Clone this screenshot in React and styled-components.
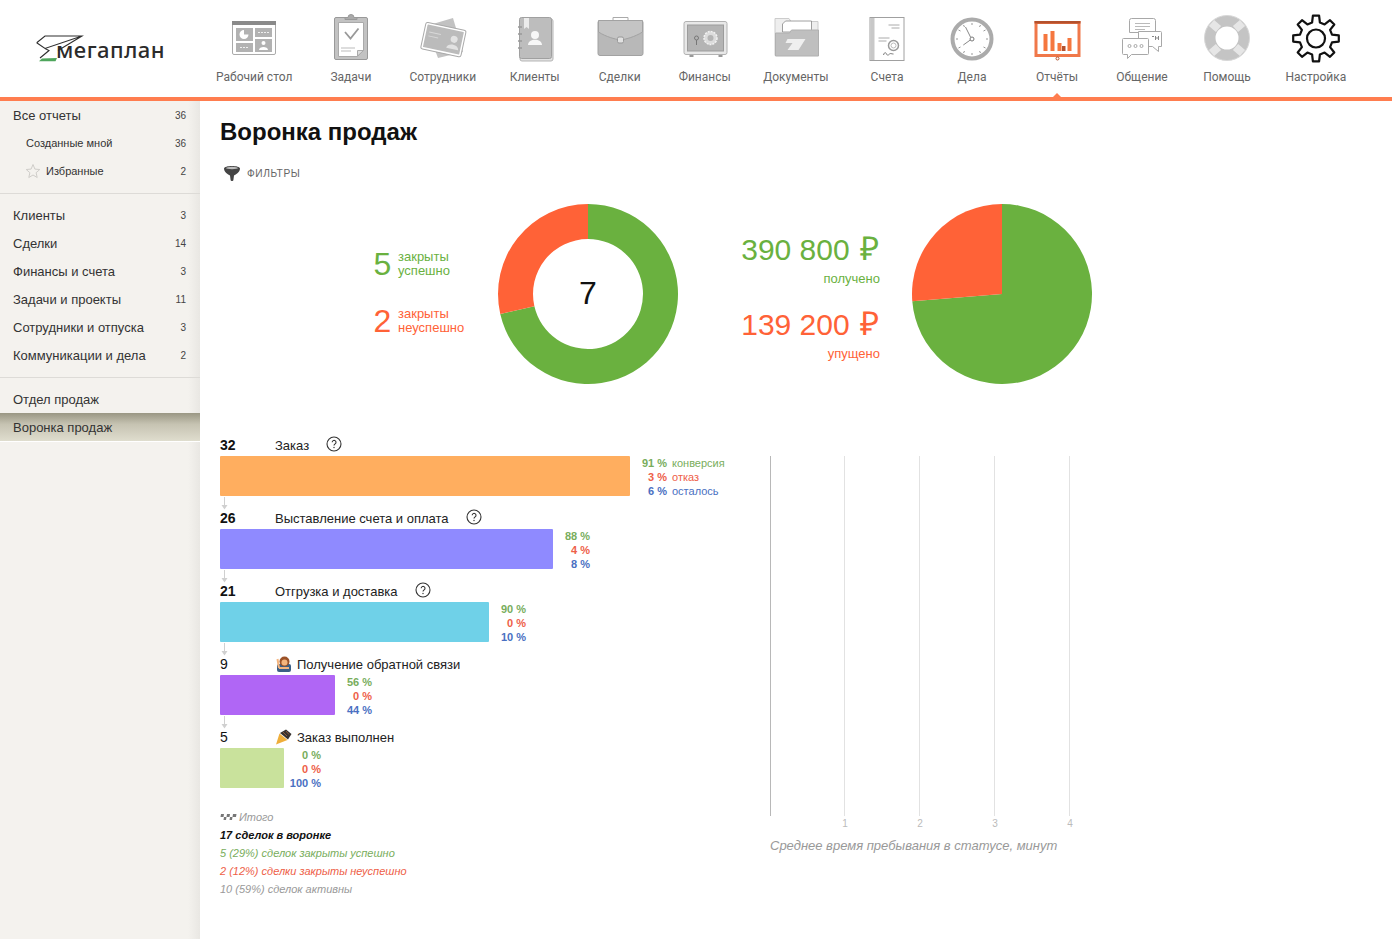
import React from "react";
import styled, { createGlobalStyle } from "styled-components";

const Global = createGlobalStyle`
  html, body { margin: 0; padding: 0; height: 100%; background: #fff; overflow: hidden; }
  body { font-family: "Liberation Sans", Arial, sans-serif; color: #222; }
  #root { height: 100%; }
`;

const Page = styled.div`display: flex; flex-direction: column; height: 939px; overflow: hidden;`;
const Header = styled.header`display: flex; height: 97px; flex: none;`;
const LogoBox = styled.div`width: 200px; flex: none; position: relative; height: 97px;`;
const LogoText = styled.span`
  position: absolute; left: 56px; top: 35px; font: 500 22px/28px "Noto Sans", sans-serif;
  letter-spacing: 0.5px; color: #2b2b2b;
`;
const Nav = styled.nav`display: flex; padding-top: 13px;`;
const NavItem = styled.a`
  display: flex; flex-direction: column; align-items: center; min-width: 85px; padding: 0 16px;
  box-sizing: border-box; flex: none;
`;
const NavLabel = styled.span`
  margin-top: 7px; font: 400 12px/14px Roboto, sans-serif; color: #666; white-space: nowrap;
`;
const IconSvg = styled.svg`display: block; width: 60px; height: 50px; flex: none; margin: 0 -30px;`;
const Rule = styled.div`height: 4px; background: #ff7d4f; flex: none; position: relative;
  &::before { content: ""; position: absolute; left: 1053px; top: -4px; border: 4px solid transparent;
    border-top: 0; border-bottom: 4px solid #ff7d4f; }
`;
const Body = styled.div`display: flex; flex: 1; min-height: 0;`;
const Side = styled.aside`
  width: 200px; flex: none; background: linear-gradient(90deg, #f4f2ee 0, #f4f2ee 188px, #e9e7e3 200px);
`;
const Section = styled.div`
  padding: ${p => (p.$first ? "0 0 8px" : "7px 0 8px")};
  border-bottom: ${p => (p.$open ? "0" : "1px solid #dddbd7")};
`;
const Row = styled.div`
  height: 28px; display: flex; align-items: center; padding: 0 14px 0 ${p => p.$indent || 13}px;
  font-size: ${p => p.$small ? 11 : 13}px; color: #333; box-sizing: border-box;
  ${p => p.$active && `background: linear-gradient(180deg, #9a9784 0, #c6c3b2 40%, #dfddce 100%); box-shadow: 0 1px 0 #fff;`}
`;
const RowName = styled.span`flex: 1; white-space: nowrap;`;
const Count = styled.span`font-size: 10px; color: #444;`;
const StarIcon = styled.svg`width: 16px; height: 16px; margin-right: 5px; flex: none;`;

const Main = styled.main`flex: 1; padding: 16px 0 0 20px; min-width: 0;`;
const Title = styled.h1`margin: 0; font: 700 24px/30px "Liberation Sans", sans-serif; color: #111;`;
const Filters = styled.div`
  display: flex; align-items: center; height: 20px; margin-top: 16px; padding-left: 3px;
  font-size: 10.2px; letter-spacing: 0.55px; color: #666;
`;
const FilterIcon = styled.svg`width: 18px; height: 18px; margin-right: 6px; flex: none;`;

const Charts = styled.section`display: flex; margin-top: 21px; height: 180px; padding-left: 153.500px;`;
const Deals = styled.div`width: 124px; flex: none; padding-top: 42px; box-sizing: border-box;`;
const Deal = styled.div`
  display: flex; align-items: center; height: 36px; margin-bottom: 21px; color: ${p => p.$c};
`;
const DealNum = styled.span`font-size: 32px; line-height: 36px; width: 24.500px; flex: none;`;
const DealText = styled.span`font-size: 13px; line-height: 14px;`;
const Ring = styled.svg`width: 180px; height: 180px; flex: none; display: block;`;
const Money = styled.div`
  width: 202.500px; flex: none; margin-right: 32px; text-align: right; padding-top: 28px; box-sizing: border-box;
`;
const Amount = styled.div`color: ${p => p.$c}; margin-bottom: 20px;`;
const Sum = styled.div`font-size: 30px; line-height: 36px; white-space: nowrap;`;
const Rub = styled.span`font-size: 33px; line-height: 0; margin-left: 2px; margin-right: 1px;`;
const SumCap = styled.div`font-size: 13px; line-height: 16px; margin-top: 3px;`;

const Lower = styled.section`display: flex; margin-top: 53px;`;
const Funnel = styled.div`width: 550px; flex: none;`;
const Stage = styled.div`height: 73px;`;
const StageHead = styled.div`display: flex; align-items: center; height: 16px; margin-bottom: 3px; font-size: 13px; color: #222;`;
const StageNum = styled.b`width: 55px; flex: none; font-size: 14px; color: #111; font-weight: ${p => p.$plain ? 400 : 700};`;
const Help = styled.svg`width: 16px; height: 16px; margin: -2px 0 0 17px; flex: none;`;
const Emoji = styled.svg`width: 17px; height: 16px; margin-right: 5px; flex: none;`;
const BarRow = styled.div`display: flex; height: 40px; align-items: flex-start;`;
const Bar = styled.div`height: 40px; background: ${p => p.$c}; border-radius: 1px; flex: none;`;
const Pcts = styled.div`width: 37px; flex: none; text-align: right; font-size: 11px; font-weight: 700;`;
const Caps = styled.div`margin-left: 5px; font-size: 11px;`;
const Line = styled.div`line-height: 14px; height: 14px; white-space: nowrap; color: ${p => p.$c};`;
const Arrow = styled.svg`display: block; width: 10px; height: 14px;`;
const Totals = styled.div`margin-top: 6px; font-size: 11px; font-style: italic; line-height: 18px;`;
const Total = styled.div`color: ${p => p.$c}; font-weight: ${p => p.$b ? 700 : 400}; display: flex; align-items: center;`;
const TotalIcon = styled.svg`width: 17px; height: 8px; margin-right: 2px;`;

const Time = styled.div`padding-top: 19px;`;
const TimeSvg = styled.svg`display: block; width: 310px; height: 376px;`;
const TimeCap = styled.div`margin-top: 6px; font-size: 13px; line-height: 16px; font-style: italic; color: #999; white-space: nowrap;`;

const G = "#6ab13f", R = "#ff6237";

const desk = (
  <g>
    <rect x="233.5" y="21.5" width="43" height="33" rx="1.5" fill="#fff" stroke="#aaa" />
    <rect x="233" y="21" width="44" height="4" fill="#8a8a8a" />
    <rect x="237" y="28" width="17" height="13" fill="#b2b2b2" />
    <rect x="256" y="28" width="17" height="9" fill="#b2b2b2" />
    <rect x="237" y="43" width="17" height="9" fill="#b2b2b2" />
    <rect x="256" y="39" width="17" height="13" fill="#b2b2b2" />
    <path d="M245 30a4.5 4.5 0 1 0 4.5 4.5H245z" fill="#fff" />
    <path d="M259 32.500h11M241 47.500h9" stroke="#eee" strokeDasharray="2 1" />
    <circle cx="264.500" cy="43" r="2" fill="#fff" />
    <path d="M260 50c0-4 9-4 9 0z" fill="#fff" />
  </g>
);
const clip = (
  <g>
    <rect x="334.500" y="17.500" width="33" height="42" rx="1.500" fill="#c2c2c2" stroke="#999" />
    <path d="M338.500 22.500h25v28l-6 6h-19z" fill="#fff" stroke="#aaa" />
    <path d="M357.500 56v-5.500h6z" fill="#ddd" stroke="#aaa" />
    <path d="M345 19.500h12v-2h-3a3 3 0 0 0-6 0h-3z" fill="#aaa" stroke="#999" />
    <path d="M345 32l5.500 6.500 8-10" fill="none" stroke="#999" strokeWidth="1.800" />
    <path d="M341 48h14M341 51h10" stroke="#bbb" />
  </g>
);
const staff = (
  <g>
    <path d="M426 26l27-8 10 34-25 6z" fill="#c2c2c2" />
    <g transform="rotate(12 443 39)">
      <rect x="424" y="27" width="39" height="25" rx="1.500" fill="#bbb" stroke="#fff" strokeWidth="2" />
      <rect x="423" y="26" width="41" height="27" rx="2" fill="none" stroke="#aaa" />
      <circle cx="454" cy="37" r="3.500" fill="#e2e2e2" />
      <path d="M448 47c0-6 12-6 12 0z" fill="#e2e2e2" />
      <path d="M428 35h12M428 39h10" stroke="#d8d8d8" />
    </g>
  </g>
);
const book = (
  <g>
    <rect x="520" y="19" width="33" height="42" rx="2" fill="#e2e2e2" stroke="#b5b5b5" />
    <rect x="519.500" y="17.500" width="32" height="41" rx="2" fill="#bdbdbd" stroke="#a0a0a0" />
    <path d="M524 18h5v11l-2.500-2-2.500 2z" fill="#ececec" />
    <path d="M518 27h4M518 34h4M518 41h4M518 48h4" stroke="#999" strokeWidth="1.500" />
    <circle cx="535" cy="35" r="4" fill="#f7f7f7" />
    <path d="M528 45c0-7 14-7 14 0z" fill="#f7f7f7" />
  </g>
);
const bag = (
  <g>
    <path d="M613.500 20v-2.500h15V20" fill="none" stroke="#aaa" />
    <rect x="598.500" y="20.500" width="45" height="35" rx="2" fill="#b8b8b8" stroke="#a2a2a2" />
    <path d="M599 20.500h44V32c-8 5-16 7-22 8-6-1-14-3-22-8z" fill="#c4c4c4" stroke="#a2a2a2" />
    <rect x="618" y="37" width="6" height="6" rx="1.500" fill="#e2e2e2" stroke="#999" />
  </g>
);
const safe = (
  <g>
    <rect x="684.500" y="21.500" width="43" height="33" rx="2" fill="#e8e8e8" stroke="#b2b2b2" />
    <rect x="688" y="25" width="36" height="26" fill="#b4b4b4" stroke="#9c9c9c" />
    <circle cx="711" cy="38" r="6.500" fill="#dcdcdc" stroke="#f2f2f2" strokeDasharray="2 1" strokeWidth="1.500" />
    <circle cx="711" cy="38" r="3" fill="#b4b4b4" />
    <circle cx="697" cy="38" r="2" fill="none" stroke="#777" />
    <path d="M697 40v5" stroke="#777" />
    <path d="M690 56h4M719 56h4" stroke="#999" strokeWidth="2" />
  </g>
);
const folder = (
  <g>
    <path d="M775.500 55.500v-37h14l2 3h27v33z" fill="#eee" stroke="#ccc" />
    <path d="M783 32v-8l3-3h26v11z" fill="#fff" stroke="#888" strokeWidth=".8" />
    <path d="M776 56V33h14l2-3h27v26z" fill="#bfbfbf" stroke="#b0b0b0" />
    <path d="M788 39h18l-7 11h-11l5-7h-7z" fill="#efefef" />
  </g>
);
const invoice = (
  <g>
    <rect x="870.500" y="17.500" width="34" height="43" fill="#fff" stroke="#a0a0a0" />
    <rect x="871" y="18" width="4" height="42" fill="#c8c8c8" />
    <path d="M889 25h11M892 28h8M879 38h11M879 41h8" stroke="#aaa" />
    <circle cx="894" cy="45.500" r="5" fill="#fff" stroke="#999" strokeWidth="1.500" />
    <circle cx="894" cy="45.500" r="2.500" fill="none" stroke="#bbb" />
    <path d="M884 55c1-3 2-3 3-1s2 1 3 0 2 0 4 0" fill="none" stroke="#777" />
  </g>
);
const clock = (
  <g>
    <circle cx="972.500" cy="39" r="19.500" fill="#fff" stroke="#ababab" strokeWidth="4" />
    <circle cx="972.500" cy="39" r="2" fill="#fff" stroke="#777" />
    <path d="M971 37l-5-10M970.800 40l-7 5" stroke="#888" />
    <path d="M972.500 23v2M972.500 53v2M956.500 39h2M986.500 39h2M964 25l1 2M981 25l-1 2M964 53l1-2M981 53l-1-2M959 30l2 1M986 30l-2 1M959 48l2-1M986 48l-2-1" stroke="#999" />
  </g>
);
const report = (
  <g>
    <rect x="1036.500" y="22.500" width="43" height="33" fill="#fff" stroke="#f0784a" strokeWidth="3" />
    <rect x="1035" y="21" width="46" height="2.500" fill="#b4512d" />
    <rect x="1044" y="34" width="4" height="17" fill="#f5773f" />
    <rect x="1051" y="31" width="4" height="20" fill="#f5773f" />
    <rect x="1058" y="43" width="4" height="8" fill="#f5773f" />
    <rect x="1062.500" y="46" width="3.500" height="5" fill="#b4512d" />
    <rect x="1068" y="38" width="4" height="13" fill="#f5773f" />
    <circle cx="1058" cy="58.500" r="1.500" fill="#fff" stroke="#b4512d" />
  </g>
);
const chat = (
  <g fill="#fff" stroke="#a8a8a8">
    <path d="M1131.500 18.500h22a2 2 0 0 1 2 2v12h-26v-12a2 2 0 0 1 2-2z" />
    <path d="M1135 23.500h15M1135 26.500h15M1135 29.500h10" strokeWidth=".8" />
    <path d="M1138.500 31.500h22a1 1 0 0 1 1 1v14h-3v5l-6-5h-14z" />
    <path d="M1123.500 38.500h24a1 1 0 0 1 1 1v14a1 1 0 0 1-1 1h-16l-4 4v-4h-4a1 1 0 0 1-1-1v-14a1 1 0 0 1 1-1z" />
    <circle cx="1129.500" cy="46" r="1.500" />
    <circle cx="1135.500" cy="46" r="1.500" />
    <circle cx="1141.500" cy="46" r="1.500" />
    <path d="M1152 36.500h2M1155.500 36v4M1158.500 36v4M1155.500 38h3" stroke="#888" />
  </g>
);
const buoy = (
  <g>
    <circle cx="1227.500" cy="38" r="17" fill="#fff" stroke="#c4c4c4" strokeWidth="11" />
    <path d="M1212 23l7 6M1243 23l-7 6M1212 53l7-6M1243 53l-7-6" stroke="#e6e6e6" strokeWidth="8" />
    <circle cx="1227.500" cy="38" r="22.500" fill="none" stroke="#d8d8d8" />
  </g>
);

function gearPath(cx, cy, ro, ri, n) {
  const step = (Math.PI * 2) / n;
  let d = "";
  for (let i = 0; i < n; i++) {
    const a = i * step - Math.PI / 2;
    const pts = [
      [ri, a - step * 0.3], [ro, a - step * 0.17], [ro, a + step * 0.17], [ri, a + step * 0.3],
    ];
    pts.forEach(([r, t], k) => {
      const x = (cx + r * Math.cos(t)).toFixed(1), y = (cy + r * Math.sin(t)).toFixed(1);
      d += (i === 0 && k === 0 ? "M" : "L") + x + " " + y + " ";
    });
  }
  return d + "Z";
}
const gear = (
  <g fill="none" stroke="#111" strokeWidth="2.200" strokeLinejoin="round">
    <path d={gearPath(1316, 38.500, 23, 16.500, 8)} />
    <circle cx="1316" cy="38.500" r="9" />
  </g>
);

const navItems = [
  ["Рабочий стол", 255, desk], ["Задачи", 351, clip], ["Сотрудники", 443, staff], ["Клиенты", 535, book],
  ["Сделки", 620.5, bag], ["Финансы", 705.5, safe], ["Документы", 796.5, folder], ["Счета", 887.5, invoice],
  ["Дела", 972.5, clock], ["Отчёты", 1057.5, report], ["Общение", 1142, chat], ["Помощь", 1227.5, buoy], ["Настройка", 1316, gear],
];

const sideTop = [["Все отчеты", 36, 13], ["Созданные мной", 36, 26, true]];
const sideMid = [["Клиенты", 3], ["Сделки", 14], ["Финансы и счета", 3], ["Задачи и проекты", 11], ["Сотрудники и отпуска", 3], ["Коммуникации и дела", 2]];

const Person = () => (
  <Emoji viewBox="0 0 17 16">
    <rect x="2" y="8" width="14" height="8" rx="2" fill="#3b5f86" />
    <circle cx="9.500" cy="5.500" r="5" fill="#9c5228" />
    <circle cx="9.500" cy="6.500" r="3" fill="#f5b57e" />
    <path d="M2.500 3l1.500 9M4 12h10" stroke="#f5b57e" strokeWidth="2" />
  </Emoji>
);
const Popper = () => (
  <Emoji viewBox="0 0 17 16">
    <path d="M1 15.500l3.500-11 8 6.500z" fill="#efae3a" />
    <path d="M5 4l6-3.500L16.500 5 13 10.500z" fill="#37332f" />
    <path d="M8 3l4 4M11 2l3 3.500" stroke="#8b5a3c" />
  </Emoji>
);
const HelpIcon = () => (
  <Help viewBox="0 0 16 16">
    <circle cx="8" cy="8" r="7" fill="#fff" stroke="#333" strokeWidth="1.100" />
    <path d="M6.200 6.300a1.900 1.900 0 1 1 2.900 1.600c-.7.5-1.100.8-1.100 1.700" fill="none" stroke="#333" strokeWidth="1.100" />
    <circle cx="8" cy="11.500" r=".7" fill="#333" />
  </Help>
);

const stages = [
  { n: 32, name: "Заказ", w: 410, c: "#ffae5f", p: [91, 3, 6], caps: true, help: true },
  { n: 26, name: "Выставление счета и оплата", w: 333, c: "#8f8aff", p: [88, 4, 8], help: true },
  { n: 21, name: "Отгрузка и доставка", w: 269, c: "#6fd1e8", p: [90, 0, 10], help: true },
  { n: 9, name: "Получение обратной связи", w: 115, c: "#b066f5", p: [56, 0, 44], emoji: <Person /> },
  { n: 5, name: "Заказ выполнен", w: 64, c: "#c9e29c", p: [0, 0, 100], emoji: <Popper />, last: true },
];
const PG = "#78ad5c", PR = "#ee6048", PB = "#4a70c2";

const polar = (cx, cy, r, f) => {
  const t = f * Math.PI * 2;
  return [cx + r * Math.sin(t), cy - r * Math.cos(t)];
};
function Donut({ frac, inner, children }) {
  const [x, y] = polar(90, 90, 90, frac);
  const [xi, yi] = polar(90, 90, inner, frac);
  const ring = inner > 0;
  const green = ring
    ? `M90 0A90 90 0 1 1 ${x} ${y}L${xi} ${yi}A${inner} ${inner} 0 1 0 90 ${90 - inner}Z`
    : `M90 90V0A90 90 0 1 1 ${x} ${y}Z`;
  const red = ring
    ? `M${x} ${y}A90 90 0 0 1 90 0V${90 - inner}A${inner} ${inner} 0 0 0 ${xi} ${yi}Z`
    : `M90 90L${x} ${y}A90 90 0 0 1 90 0Z`;
  return (
    <Ring viewBox="0 0 180 180">
      <path d={green} fill={G} />
      <path d={red} fill={R} />
      {children}
    </Ring>
  );
}

export default function App() {
  return (
    <Page>
      <Global />
      <Header>
        <LogoBox>
          <svg width="60" height="40" viewBox="30 30 60 40" style={{ position: "absolute", left: 30, top: 30 }}>
            <path d="M36.700 42.700L45 36h37L58 50.500M36.700 42.700L45 48.500 82 36M45 48.500L49 50.500 40 58" fill="none" stroke="#2f2f2f" strokeWidth="1.100" />
            <path d="M39 61.200l3-2.700 15-.5-1.500 3.200z" fill="#4ea55b" />
          </svg>
          <LogoText>мегаплан</LogoText>
        </LogoBox>
        <Nav>
          {navItems.map(([label, cx, icon]) => (
            <NavItem key={label}>
              <IconSvg viewBox={`${cx - 30} 13 60 50`}>{icon}</IconSvg>
              <NavLabel>{label}</NavLabel>
            </NavItem>
          ))}
        </Nav>
      </Header>
      <Rule />
      <Body>
        <Side>
          <Section $first>
            {sideTop.map(([t, c, ind, small]) => (
              <Row key={t} $indent={ind} $small={small}><RowName>{t}</RowName><Count>{c}</Count></Row>
            ))}
            <Row $indent={25} $small>
              <StarIcon viewBox="0 0 16 16">
                <path d="M8 1.500l1.900 4.600 4.900.4-3.700 3.200 1.100 4.800L8 12l-4.200 2.500 1.100-4.800L1.200 6.500l4.900-.4z" fill="none" stroke="#cfcdc9" />
              </StarIcon>
              <RowName>Избранные</RowName><Count>2</Count>
            </Row>
          </Section>
          <Section>
            {sideMid.map(([t, c]) => <Row key={t}><RowName>{t}</RowName><Count>{c}</Count></Row>)}
          </Section>
          <Section $open>
            <Row><RowName>Отдел продаж</RowName></Row>
            <Row $active><RowName>Воронка продаж</RowName></Row>
          </Section>
        </Side>
        <Main>
          <Title>Воронка продаж</Title>
          <Filters>
            <FilterIcon viewBox="0 0 18 18">
              <path d="M1 4.500C1 1 17 1 17 4.500c0 3.500-4 6-6 7l-.6 4.500c-.1 1.300-2.700 1.300-2.800 0L7 11.500C5 10.500 1 8 1 4.500z" fill="#444" />
              <ellipse cx="9" cy="4" rx="6" ry="1.200" fill="#bdbdbd" />
            </FilterIcon>
            ФИЛЬТРЫ
          </Filters>
          <Charts>
            <Deals>
              <Deal $c={G}><DealNum>5</DealNum><DealText>закрыты<br />успешно</DealText></Deal>
              <Deal $c={R}><DealNum>2</DealNum><DealText>закрыты<br />неуспешно</DealText></Deal>
            </Deals>
            <Donut frac={5 / 7} inner={55}>
              <text x="90" y="100" textAnchor="middle" fontSize="32" fontFamily="Liberation Sans, sans-serif" fill="#111">7</text>
            </Donut>
            <Money>
              <Amount $c={G}><Sum>390 800 <Rub>₽</Rub></Sum><SumCap>получено</SumCap></Amount>
              <Amount $c={R}><Sum>139 200 <Rub>₽</Rub></Sum><SumCap>упущено</SumCap></Amount>
            </Money>
            <Donut frac={390800 / 530000} inner={0} />
          </Charts>
          <Lower>
            <Funnel>
              {stages.map(s => (
                <Stage key={s.n}>
                  <StageHead>
                    <StageNum $plain={s.n < 10}>{s.n}</StageNum>
                    {s.emoji}
                    {s.name}
                    {s.help && <HelpIcon />}
                  </StageHead>
                  <BarRow>
                    <Bar $c={s.c} style={{ width: s.w }} />
                    <Pcts>
                      <Line $c={PG}>{s.p[0]} %</Line>
                      <Line $c={PR}>{s.p[1]} %</Line>
                      <Line $c={PB}>{s.p[2]} %</Line>
                    </Pcts>
                    {s.caps && (
                      <Caps>
                        <Line $c={PG}>конверсия</Line>
                        <Line $c={PR}>отказ</Line>
                        <Line $c={PB}>осталось</Line>
                      </Caps>
                    )}
                  </BarRow>
                  {!s.last && (
                    <Arrow viewBox="0 0 10 14">
                      <path d="M4.500 1v10" stroke="#d0d0d0" />
                      <path d="M1.500 9h6L4.500 13.500z" fill="#d0d0d0" />
                    </Arrow>
                  )}
                </Stage>
              ))}
              <Totals>
                <Total $c="#999">
                  <TotalIcon viewBox="0 0 17 8">
                    <path d="M1 1h3l-.5 3h-3zM4 4h2.500L6 7H3.500zM7 1h3l-.5 3h-3zM10 4h2.500L12 7H9.500zM13 1h3.500l-.5 3h-3.500z" fill="#777" />
                  </TotalIcon>
                  Итого
                </Total>
                <Total $c="#111" $b>17 сделок в воронке</Total>
                <Total $c={PG}>5 (29%) сделок закрыты успешно</Total>
                <Total $c={PR}>2 (12%) сделки закрыты неуспешно</Total>
                <Total $c="#999">10 (59%) сделок активны</Total>
              </Totals>
            </Funnel>
            <Time>
              <TimeSvg viewBox="0 0 310 376">
                <path d="M.5 0v360" stroke="#b8b8b8" />
                {[1, 2, 3, 4].map(i => (
                  <g key={i}>
                    <path d={`M${75 * i - .5} 0v360`} stroke="#e2e2e2" />
                    <text x={75 * i} y="371" fontSize="10" textAnchor="middle" fill="#bbb" fontFamily="Liberation Sans, sans-serif">{i}</text>
                  </g>
                ))}
              </TimeSvg>
              <TimeCap>Среднее время пребывания в статусе, минут</TimeCap>
            </Time>
          </Lower>
        </Main>
      </Body>
    </Page>
  );
}
